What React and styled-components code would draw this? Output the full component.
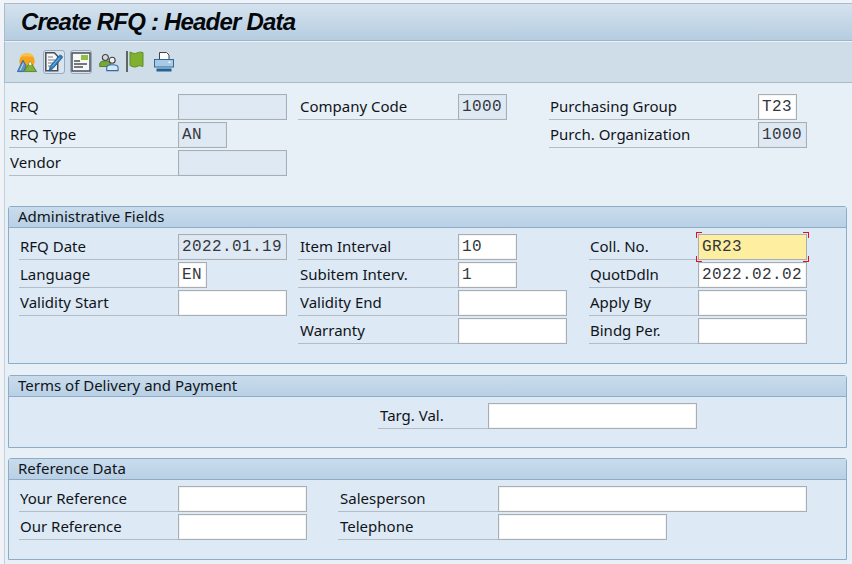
import React from 'react';
import styled, { createGlobalStyle } from 'styled-components';

const GlobalStyle = createGlobalStyle`
  html, body { margin: 0; padding: 0; background: #f0f4f8; }
  body { font-family: "Noto Sans", "Liberation Sans", sans-serif; color: #10141a; overflow: hidden; }
`;

const Screen = styled.div`
  width: 852px;
  height: 564px;
  box-sizing: border-box;
  padding: 3px 0 0 4px;
  display: flex;
  flex-direction: column;
  overflow: hidden;
`;

const TitleBar = styled.div`
  height: 38px;
  flex: none;
  box-sizing: border-box;
  padding-left: 16px;
  display: flex;
  align-items: center;
  background: linear-gradient(#d5e2ee, #b5cde1);
  border-top: 1px solid #a8bccd;
  border-left: 1px solid #a8bccd;
  border-bottom: 1px solid #9db5ca;
`;

const Title = styled.h1`
  margin: 0;
  font-family: "Liberation Sans", Arial, sans-serif;
  font-size: 24px;
  letter-spacing: -0.8px;
  font-weight: bold;
  font-style: italic;
  color: #05070a;
`;

const Toolbar = styled.div`
  height: 42px;
  flex: none;
  box-sizing: border-box;
  padding-left: 11px;
  display: flex;
  align-items: center;
  background: #cfdde9;
  border-top: 1px solid #eef3f8;
  border-left: 1px solid #a8bccd;
  border-bottom: 1px solid #a9bac9;
`;

const ToolButton = styled.div`
  width: ${p => p.$width || 22}px;
  height: 24px;
  margin-right: ${p => p.$gap ?? 5}px;
  box-sizing: border-box;
  display: flex;
  align-items: center;
  justify-content: center;
  border-radius: 3px;
  border: 1px solid ${p => (p.$raised ? '#94a9c6' : 'transparent')};
  background: ${p => (p.$raised ? '#d9e4ee' : 'transparent')};
`;

const Content = styled.div`
  flex: 1;
  background: #e8f0f7;
  border-left: 1px solid #c3d0dc;
  padding: 11px 5px 0 3px;
  display: flex;
  flex-direction: column;
`;

const FieldGrid = styled.div`
  display: grid;
  grid-template-columns: ${p => p.$columns};
  grid-auto-rows: 26px;
  row-gap: 2px;
  padding-left: ${p => p.$indent || 0}px;
`;

const Label = styled.div`
  box-sizing: border-box;
  height: 26px;
  line-height: 24px;
  padding-left: ${p => p.$inset ?? 1}px;
  font-size: 15px;
  white-space: nowrap;
  border-bottom: 1px solid #b4bcc4;
`;

const Gap = styled.div``;

const Field = styled.div`
  box-sizing: border-box;
  width: ${p => p.$width}px;
  height: 26px;
  padding-left: 3px;
  line-height: 24px;
  font-family: "Liberation Mono", "DejaVu Sans Mono", monospace;
  font-size: 16px;
  letter-spacing: 0.4px;
  color: #34383e;
  border: 1px solid #a8aeb4;
  box-shadow: inset 0 0 0 1px ${p => (p.$readonly ? '#d9e5ef' : p.$focus ? '#fdeea0' : '#f4f4f4')};
  background: ${p => (p.$readonly ? '#dee9f3' : p.$focus ? '#fdeea0' : '#ffffff')};
`;

const FocusWrap = styled.div`
  position: relative;
  width: ${p => p.$width}px;
`;

const Corner = styled.span`
  position: absolute;
  width: 5px;
  height: 5px;
  border: 0 solid #e0101c;
  ${p => (p.$top ? 'top: -2px; border-top-width: 1px;' : 'bottom: -2px; border-bottom-width: 1px;')}
  ${p => (p.$left ? 'left: -2px; border-left-width: 1px;' : 'right: -2px; border-right-width: 1px;')}
`;

const Panel = styled.section`
  box-sizing: border-box;
  height: ${p => p.$height}px;
  margin-top: ${p => p.$top}px;
  background: #dde9f4;
  border: 1px solid #8eacc8;
  border-radius: 3px 3px 0 0;
`;

const PanelHeader = styled.div`
  height: 21px;
  box-sizing: border-box;
  padding-left: 9px;
  line-height: 18px;
  font-size: 15px;
  background: linear-gradient(#c9dcec, #b9d0e5);
  border-bottom: 1px solid #8eacc8;
`;

const PanelBody = styled.div`
  padding: 6px 0 0 ${p => p.$indent || 10}px;
`;

const MountainIcon = () => (
  <svg width="22" height="21" viewBox="0 0 22 21">
    <circle cx="11" cy="9" r="8.500" fill="#f7a41d" />
    <path d="M3 5a9 9 0 0 1 16 0l-3-1H6z" fill="#f9c04a" />
    <path d="M.5 20.500 6.500 8l3.500 6-2.500 6.500z" fill="#5f93c4" stroke="#2d6498" />
    <path d="M3.500 19 7 11.500" stroke="#cfe2f2" strokeWidth="1" />
    <path d="M8 20.500l6.500-11 7 11z" fill="#7fb23a" stroke="#557f2a" />
    <path d="M12.800 12.500l1.700-3 1.800 3-1.800 1z" fill="#f4f8ec" />
  </svg>
);

const DocEditIcon = () => (
  <svg width="18" height="20" viewBox="0 0 18 20">
    <path d="M.8.800h8.500l3.400 3.400v14.600H.8z" fill="#f6f7f7" stroke="#4a4f55" strokeWidth="1.500" />
    <path d="M3 5h5M3 8h7M3 11h5M3 14h3" stroke="#7b7f83" strokeWidth="1.200" />
    <path d="M4 19l1.200-4.800L14 3.800c.7-.8 1.700-.8 2.600-.1.900.8 1 1.700.3 2.500L8 16.500z" fill="#2f7fbd" stroke="#1b5a8f" strokeWidth="0.800" />
    <path d="M7 14.500 14.500 6" stroke="#8cc0e6" strokeWidth="0.900" />
  </svg>
);

const TextPanelIcon = () => (
  <svg width="20" height="20" viewBox="0 0 20 20">
    <rect x="1" y="1" width="18" height="18" fill="#f7f8f8" stroke="#4a4f55" strokeWidth="1.500" />
    <rect x="10" y="3" width="7" height="5" fill="#8fc044" />
    <path d="M3 9h6M3 12h13M3 15h9" stroke="#4a4f55" strokeWidth="1.500" />
  </svg>
);

const PeopleIcon = () => (
  <svg width="22" height="20" viewBox="0 0 22 20">
    <circle cx="7" cy="5" r="3.300" fill="#d4d7d7" stroke="#3d4246" strokeWidth="1.200" />
    <path d="M.8 15v-3c0-2 2-3 6.200-3s5.500 1 5.500 3v3z" fill="#79a83a" stroke="#4b7a20" />
    <circle cx="14.500" cy="8" r="3.300" fill="#eef0f0" stroke="#3d4246" strokeWidth="1.200" />
    <path d="M8.500 19.500v-3.500c0-2 2-3 6-3s6.500 1 6.500 3v3.500z" fill="#d6e6f4" stroke="#2d6da3" strokeWidth="1.200" />
  </svg>
);

const FlagIcon = () => (
  <svg width="20" height="22" viewBox="0 0 20 22">
    <rect x="0" y="0" width="2" height="21" fill="#5f6467" />
    <path d="M4 1c3 1.500 5 2 7 1s3-1 6-.5v14c-3-1-4-1-6 0s-4 .5-7-1z" fill="#7fb02e" stroke="#5d8f2a" />
  </svg>
);

const PrinterIcon = () => (
  <svg width="20" height="20" viewBox="0 0 20 20">
    <path d="M5.500.5h7l2.500 2.500v5h-9.500z" fill="#fff" stroke="#3f4448" />
    <rect x="0.500" y="7.500" width="19" height="7.500" fill="#a9c9e4" stroke="#2b6b9e" />
    <rect x="14.500" y="9.500" width="2" height="1.500" fill="#fff" />
    <rect x="2.500" y="16.500" width="15" height="3" fill="#1f6494" />
  </svg>
);

const adminColumns = '159px 120px 160px 131px 109px 109px';
const headerColumns = '169px 120px 160px 91px 209px 90px';
const referenceColumns = '159px 160px 160px 1fr';

export default function App() {
  return (
    <>
      <GlobalStyle />
      <Screen>
        <TitleBar>
          <Title>Create RFQ : Header Data</Title>
        </TitleBar>
        <Toolbar>
          <ToolButton $gap={5}><MountainIcon /></ToolButton>
          <ToolButton $raised><DocEditIcon /></ToolButton>
          <ToolButton $raised $gap={6}><TextPanelIcon /></ToolButton>
          <ToolButton $gap={5}><PeopleIcon /></ToolButton>
          <ToolButton $gap={6}><FlagIcon /></ToolButton>
          <ToolButton><PrinterIcon /></ToolButton>
        </Toolbar>
        <Content>
          <FieldGrid $columns={headerColumns} $indent={1}>
            <Label>RFQ</Label>
            <Field $width={109} $readonly />
            <Label $inset={2}>Company Code</Label>
            <Field $width={49} $readonly>1000</Field>
            <Label>Purchasing Group</Label>
            <Field $width={39}>T23</Field>

            <Label>RFQ Type</Label>
            <Field $width={49} $readonly>AN</Field>
            <Gap />
            <Gap />
            <Label>Purch. Organization</Label>
            <Field $width={49} $readonly>1000</Field>

            <Label>Vendor</Label>
            <Field $width={109} $readonly />
          </FieldGrid>

          <Panel $top={30} $height={158}>
            <PanelHeader>Administrative Fields</PanelHeader>
            <PanelBody>
              <FieldGrid $columns={adminColumns}>
                <Label>RFQ Date</Label>
                <Field $width={109} $readonly>2022.01.19</Field>
                <Label $inset={2}>Item Interval</Label>
                <Field $width={59}>10</Field>
                <Label>Coll. No.</Label>
                <FocusWrap $width={109}>
                  <Field $width={109} $focus>GR23</Field>
                  <Corner $top $left />
                  <Corner $top />
                  <Corner $left />
                  <Corner />
                </FocusWrap>

                <Label>Language</Label>
                <Field $width={29}>EN</Field>
                <Label $inset={2}>Subitem Interv.</Label>
                <Field $width={59}>1</Field>
                <Label>QuotDdln</Label>
                <Field $width={109}>2022.02.02</Field>

                <Label>Validity Start</Label>
                <Field $width={109} />
                <Label $inset={2}>Validity End</Label>
                <Field $width={109} />
                <Label>Apply By</Label>
                <Field $width={109} />

                <Gap />
                <Gap />
                <Label $inset={2}>Warranty</Label>
                <Field $width={109} />
                <Label>Bindg Per.</Label>
                <Field $width={109} />
              </FieldGrid>
            </PanelBody>
          </Panel>

          <Panel $top={11} $height={73}>
            <PanelHeader>Terms of Delivery and Payment</PanelHeader>
            <PanelBody $indent={369}>
              <FieldGrid $columns="110px 1fr">
                <Label $inset={2}>Targ. Val.</Label>
                <Field $width={209} />
              </FieldGrid>
            </PanelBody>
          </Panel>

          <Panel $top={10} $height={102}>
            <PanelHeader>Reference Data</PanelHeader>
            <PanelBody>
              <FieldGrid $columns={referenceColumns}>
                <Label>Your Reference</Label>
                <Field $width={129} />
                <Label $inset={2}>Salesperson</Label>
                <Field $width={309} />
                <Label>Our Reference</Label>
                <Field $width={129} />
                <Label $inset={2}>Telephone</Label>
                <Field $width={169} />
              </FieldGrid>
            </PanelBody>
          </Panel>
        </Content>
      </Screen>
    </>
  );
}
